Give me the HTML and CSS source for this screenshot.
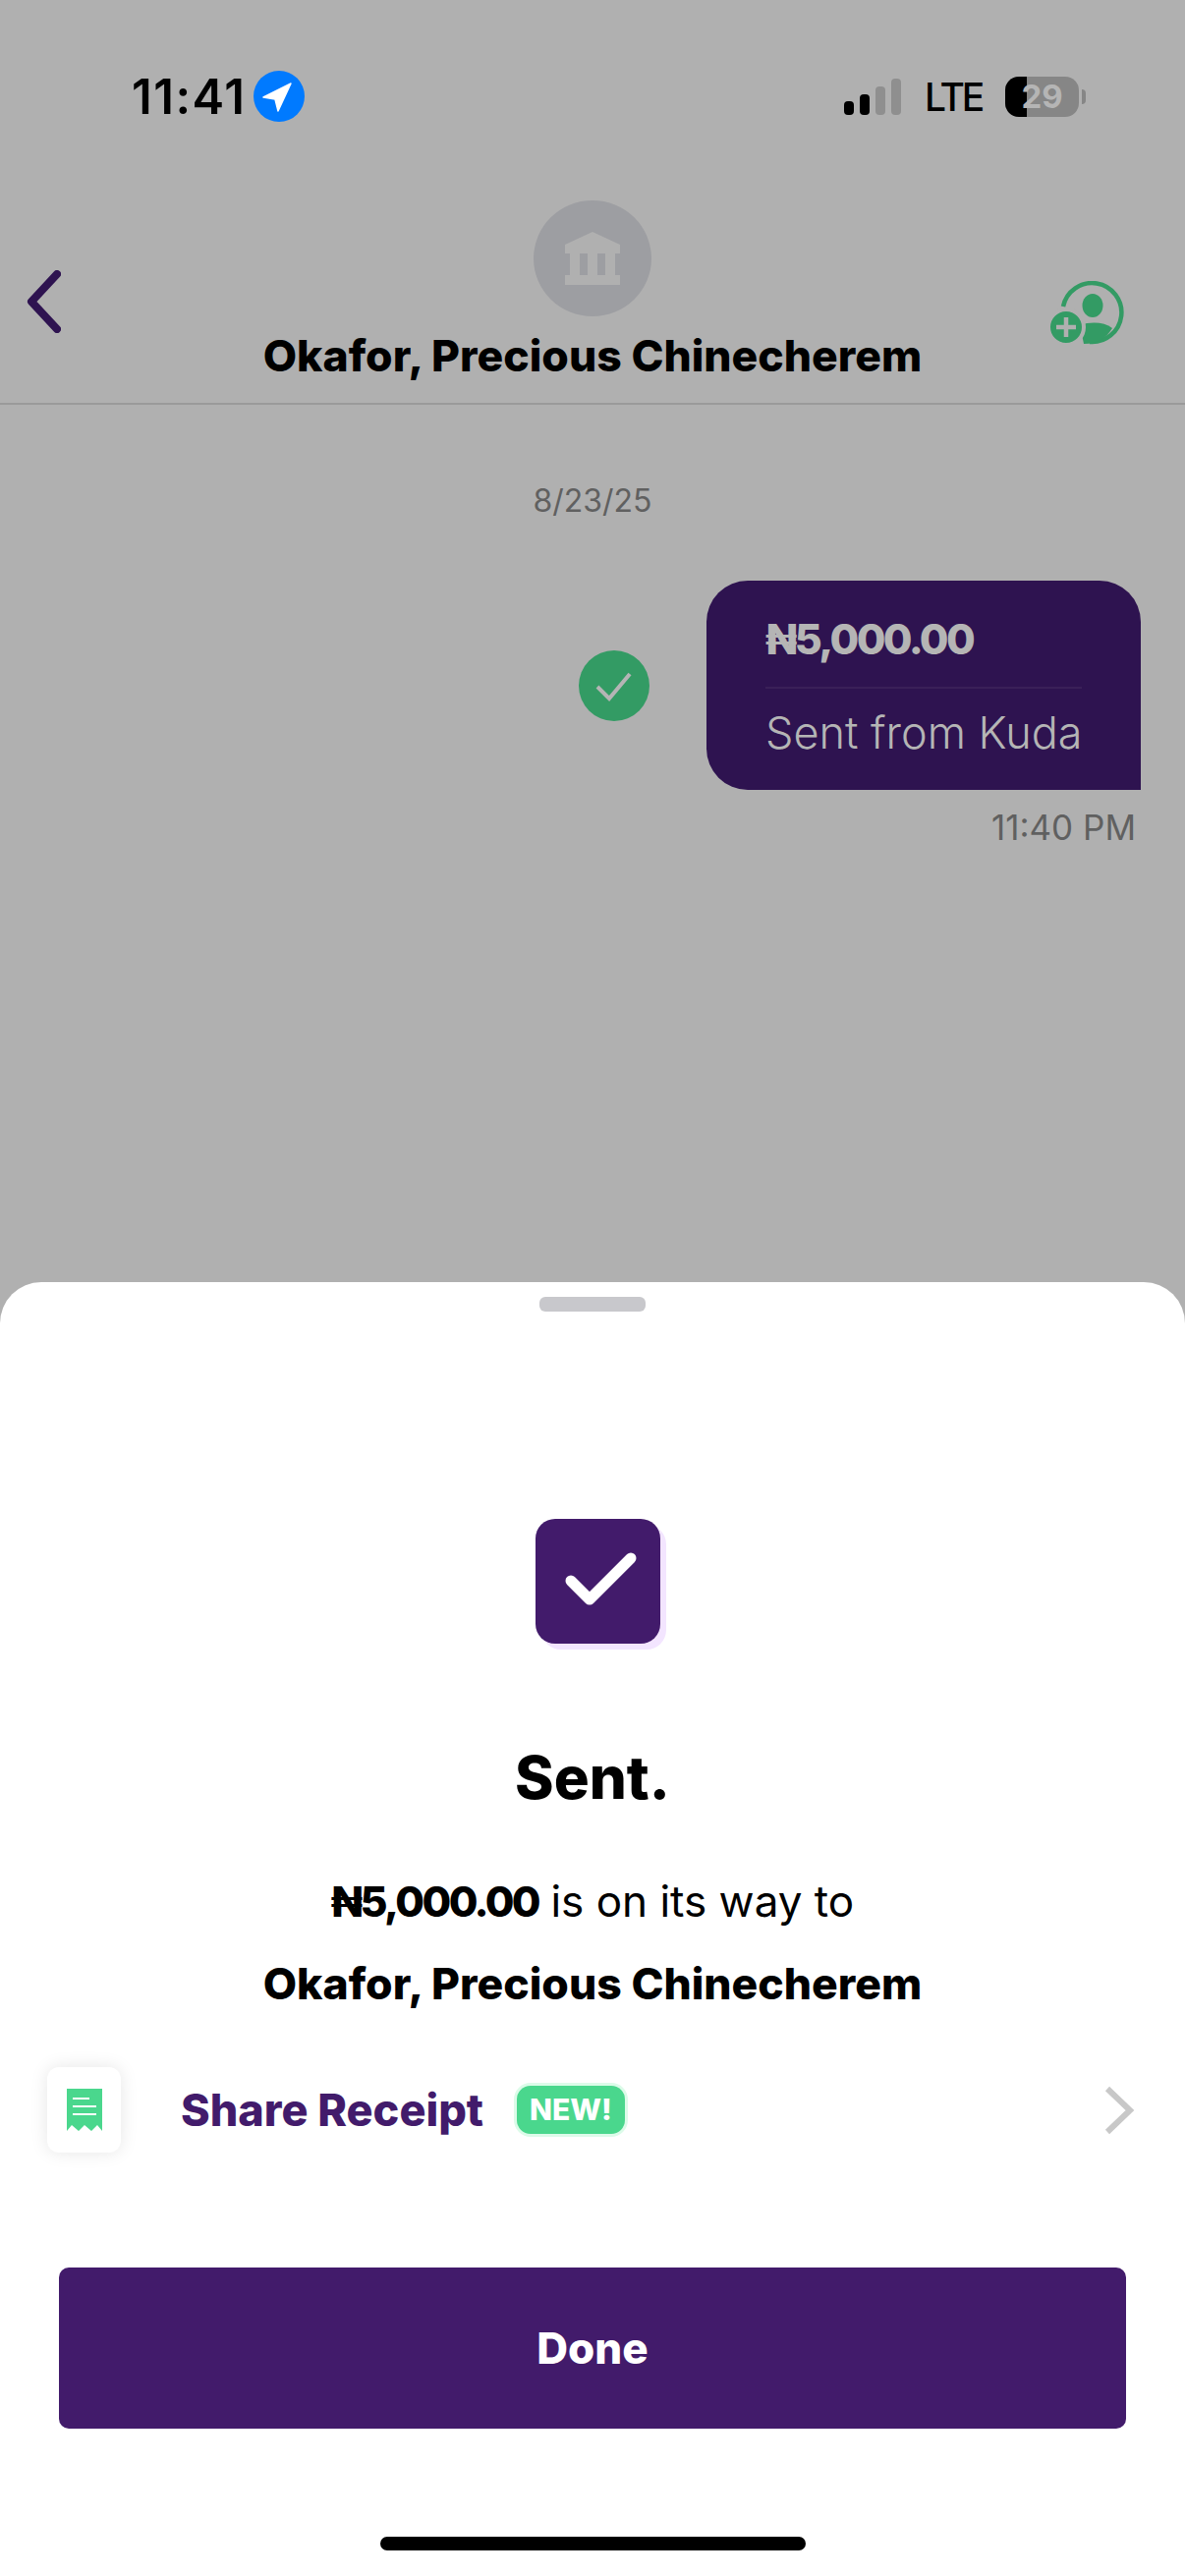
FILE: index.html
```html
<!DOCTYPE html>
<html lang="en">
<head>
    <meta charset="UTF-8">
    <meta name="viewport" content="width=device-width, initial-scale=1.0">
    <title>Sent</title>
    <link rel="stylesheet" href="styles.css">
</head>
<body>
    <div class="screen">
        <div class="status-bar">
            <div class="status-left">
                <span class="status-time">11:41</span>
                <svg class="status-location" viewBox="0 0 52 52">
                    <circle cx="26" cy="26" r="26" fill="#007aff"/>
                    <path d="M10 27 L38 13 L25 41 L22 29 Z" fill="#fff" stroke="#fff" stroke-width="1.5" stroke-linejoin="round"/>
                </svg>
            </div>
            <div class="status-right">
                <div class="signal">
                    <span class="signal-bar bar-1"></span>
                    <span class="signal-bar bar-2"></span>
                    <span class="signal-bar bar-3 off"></span>
                    <span class="signal-bar bar-4 off"></span>
                </div>
                <span class="status-lte">LTE</span>
                <div class="battery">
                    <div class="battery-body">
                        <span class="battery-fill"></span>
                        <span class="battery-level">29</span>
                    </div>
                    <span class="battery-nub"></span>
                </div>
            </div>
        </div>

        <header class="chat-header">
            <svg class="back-icon" viewBox="0 0 35 64">
                <path d="M31 4 L5 32 L31 60" fill="none" stroke="#2e1350" stroke-width="8" stroke-linecap="round" stroke-linejoin="round"/>
            </svg>
            <div class="avatar">
                <svg viewBox="0 0 56 54" class="avatar-icon">
                    <path d="M28 0 L56 13 V22 H0 V13 Z" fill="#b0b0b0"/>
                    <rect x="5" y="22" width="10" height="22" fill="#b0b0b0"/>
                    <rect x="23" y="22" width="10" height="22" fill="#b0b0b0"/>
                    <rect x="41" y="22" width="10" height="22" fill="#b0b0b0"/>
                    <rect x="0" y="44" width="56" height="10" fill="#b0b0b0"/>
                </svg>
            </div>
            <h1 class="chat-title">Okafor, Precious Chinecherem</h1>
            <svg class="add-icon" viewBox="0 0 76 66">
                <path d="M13 26 A30 30 0 1 1 40 62" fill="none" stroke="#339b64" stroke-width="4.5"/>
                <ellipse cx="43" cy="25" rx="10.5" ry="12" fill="#339b64"/>
                <path d="M30 45 C42 41 55 42 63 48 C57 58 48 64 34 64 Z" fill="#339b64"/>
                <circle cx="16" cy="47" r="18" fill="#339b64" stroke="#b0b0b0" stroke-width="4"/>
                <path d="M16 37 V57 M6 47 H26" stroke="#b0b0b0" stroke-width="4.5"/>
            </svg>
        </header>

        <div class="chat-body">
            <div class="chat-date">8/23/25</div>
            <div class="message">
                <svg class="message-status" viewBox="0 0 72 72">
                    <circle cx="36" cy="36" r="36" fill="#339b64"/>
                    <path d="M19 37 L31 49 L52 24" fill="none" stroke="#b5b5b5" stroke-width="4"/>
                </svg>
                <div class="bubble">
                    <div class="bubble-amount">₦5,000.00</div>
                    <div class="bubble-note">Sent from Kuda</div>
                </div>
            </div>
            <div class="message-time">11:40 PM</div>
        </div>

        <section class="sheet">
            <div class="sheet-handle"></div>
            <div class="sent-mark">
                <svg viewBox="0 0 127 127" class="sent-check">
                    <path d="M36 63 L55 82 L97 40" fill="none" stroke="#fff" stroke-width="11" stroke-linecap="round" stroke-linejoin="round"/>
                </svg>
            </div>
            <h2 class="sent-title">Sent.</h2>
            <p class="sent-line"><strong>₦5,000.00</strong> is on its way to</p>
            <p class="sent-line sent-name">Okafor, Precious Chinecherem</p>

            <div class="receipt-row">
                <div class="receipt-box">
                    <svg viewBox="0 0 36 43" class="receipt-icon">
                        <path d="M0 0 H36 V43 L31 37 L25 43 L18 37 L12 43 L5 37 L0 43 Z" fill="#4ad78d"/>
                        <path d="M6 10 H23 M6 18 H30 M6 26 H30" stroke="#fff" stroke-width="2"/>
                    </svg>
                </div>
                <span class="receipt-label">Share Receipt</span>
                <span class="new-badge">NEW!</span>
                <svg class="receipt-chevron" viewBox="0 0 32 52">
                    <path d="M4 4 L27 26 L4 48" fill="none" stroke="#c8c8c8" stroke-width="6"/>
                </svg>
            </div>

            <button class="done-button">Done</button>
            <div class="home-indicator"></div>
        </section>
    </div>
</body>
</html>
```

FILE: styles.css
```css
html, body {
    margin: 0;
    padding: 0;
}

body {
    font-family: "Inter", "Noto Sans", sans-serif;
    background-color: #b0b0b0;
    color: #000;
}

.screen {
    display: flex;
    flex-direction: column;
    width: 1206px;
    height: 2622px;
    overflow: hidden;
    background-color: #b0b0b0;
}

/* status bar */
.status-bar {
    display: flex;
    justify-content: space-between;
    align-items: center;
    height: 52px;
    padding: 72px 101px 0 134px;
}

.status-left {
    display: flex;
    align-items: center;
    gap: 9px;
}

.status-time {
    width: 115px;
    font-size: 49px;
    font-weight: 600;
    letter-spacing: 1.5px;
    white-space: nowrap;
}

.status-location {
    width: 52px;
    height: 52px;
}

.status-right {
    display: flex;
    align-items: center;
}

.signal {
    display: flex;
    align-items: flex-end;
    gap: 6px;
    height: 37px;
    margin-right: 24px;
}

.signal-bar {
    width: 10px;
    border-radius: 4px;
    background-color: #000;
}

.signal-bar.off {
    background-color: #8f8f8f;
}

.bar-1 { height: 14px; }
.bar-2 { height: 21px; }
.bar-3 { height: 29px; }
.bar-4 { height: 37px; }

.status-lte {
    width: 82px;
    font-size: 39px;
    font-weight: 500;
    letter-spacing: -3px;
}

.battery {
    display: flex;
    align-items: center;
    gap: 3px;
}

.battery-body {
    position: relative;
    width: 75px;
    height: 41px;
    border-radius: 14px;
    overflow: hidden;
    background-color: #868686;
    text-align: center;
}

.battery-fill {
    position: absolute;
    left: 0;
    top: 0;
    width: 22px;
    height: 100%;
    background-color: #000;
}

.battery-level {
    position: relative;
    font-size: 33px;
    font-weight: 700;
    line-height: 41px;
    color: #b5b5b5;
}

.battery-nub {
    width: 4px;
    height: 15px;
    border-radius: 0 4px 4px 0;
    background-color: #868686;
}

/* header */
.chat-header {
    position: relative;
    display: flex;
    flex-direction: column;
    align-items: center;
    height: 206px;
    margin-top: 80px;
    border-bottom: 2px solid #9a9a9a;
}

.avatar {
    display: flex;
    align-items: center;
    justify-content: center;
    width: 120px;
    height: 118px;
    border-radius: 50%;
    background-color: #9d9ea2;
}

.avatar-icon {
    width: 56px;
    height: 54px;
}

.chat-title {
    margin: 14px 0 0;
    font-size: 44.5px;
    font-weight: 800;
    line-height: 52px;
}

.back-icon {
    position: absolute;
    left: 27px;
    top: 71px;
    width: 35px;
    height: 64px;
}

.add-icon {
    position: absolute;
    left: 1069px;
    top: 82px;
    width: 76px;
    height: 66px;
}

/* chat */
.chat-body {
    display: flex;
    flex-direction: column;
    flex: 1;
}

.chat-date {
    margin-top: 80px;
    font-size: 32px;
    line-height: 36px;
    text-align: center;
    color: #606060;
}

.message {
    display: flex;
    align-items: center;
    justify-content: flex-end;
    gap: 58px;
    margin-top: 63px;
    padding-right: 45px;
}

.message-status {
    width: 72px;
    height: 72px;
}

.bubble {
    box-sizing: border-box;
    width: 442px;
    height: 213px;
    padding: 31px 60px 0;
    border-radius: 42px 42px 0 42px;
    background-color: #2e1350;
    color: #b5b5b5;
}

.bubble-amount {
    height: 77px;
    border-bottom: 2px solid #3a2058;
    font-size: 43px;
    font-weight: 800;
    letter-spacing: -2.6px;
    line-height: 56px;
}

.bubble-note {
    margin-top: 19px;
    font-size: 45px;
    font-weight: 300;
    line-height: 52px;
    white-space: nowrap;
}

.message-time {
    margin-top: 16px;
    padding-right: 50px;
    font-size: 35px;
    line-height: 44px;
    text-align: right;
    color: #606060;
}

/* bottom sheet */
.sheet {
    display: flex;
    flex-direction: column;
    align-items: center;
    box-sizing: border-box;
    height: 1317px;
    padding-top: 15px;
    border-radius: 42px 42px 0 0;
    background-color: #fff;
}

.sheet-handle {
    width: 108px;
    height: 15px;
    border-radius: 6px;
    background-color: #c8c8cc;
}

.sent-mark {
    width: 127px;
    height: 127px;
    margin-top: 211px;
    margin-left: 10px;
    border-radius: 20px;
    background-color: #421b6b;
    box-shadow: 6px 6px 0 #f3e5ff;
}

.sent-check {
    display: block;
    width: 127px;
    height: 127px;
}

.sent-title {
    margin: 100px 0 0;
    font-size: 60px;
    font-weight: 800;
    line-height: 72px;
}

.sent-line {
    margin: 64px 0 0;
    font-size: 44px;
    line-height: 52px;
}

.sent-line strong {
    font-size: 43px;
    font-weight: 800;
    letter-spacing: -2.6px;
}

.sent-name {
    margin-top: 32px;
    font-size: 44.5px;
    font-weight: 800;
}

.receipt-row {
    display: flex;
    align-items: center;
    align-self: stretch;
    height: 87px;
    margin-top: 59px;
    padding: 0 51px 0 48px;
}

.receipt-box {
    display: flex;
    align-items: center;
    justify-content: center;
    width: 75px;
    height: 87px;
    border-radius: 12px;
    background-color: #fff;
    box-shadow: 0 0 18px rgba(0, 0, 0, 0.1);
}

.receipt-icon {
    width: 36px;
    height: 43px;
}

.receipt-label {
    margin-left: 61px;
    font-size: 45px;
    font-weight: 800;
    color: #421b6b;
}

.new-badge {
    margin-left: 34px;
    padding: 0 13px;
    font-size: 30px;
    font-weight: 800;
    line-height: 49px;
    color: #fff;
    border-radius: 14px;
    background-color: #4ad78d;
    box-shadow: 0 0 0 3px #dcfbe9;
}

.receipt-chevron {
    width: 32px;
    height: 52px;
    margin-left: auto;
}

.done-button {
    box-sizing: border-box;
    width: 1086px;
    height: 164px;
    margin-top: 117px;
    border: none;
    border-radius: 10px;
    font-family: inherit;
    font-size: 44px;
    font-weight: 800;
    color: #fff;
    background-color: #421b6b;
}

.home-indicator {
    width: 433px;
    height: 14px;
    margin-top: 110px;
    border-radius: 7px;
    background-color: #000;
}
```
